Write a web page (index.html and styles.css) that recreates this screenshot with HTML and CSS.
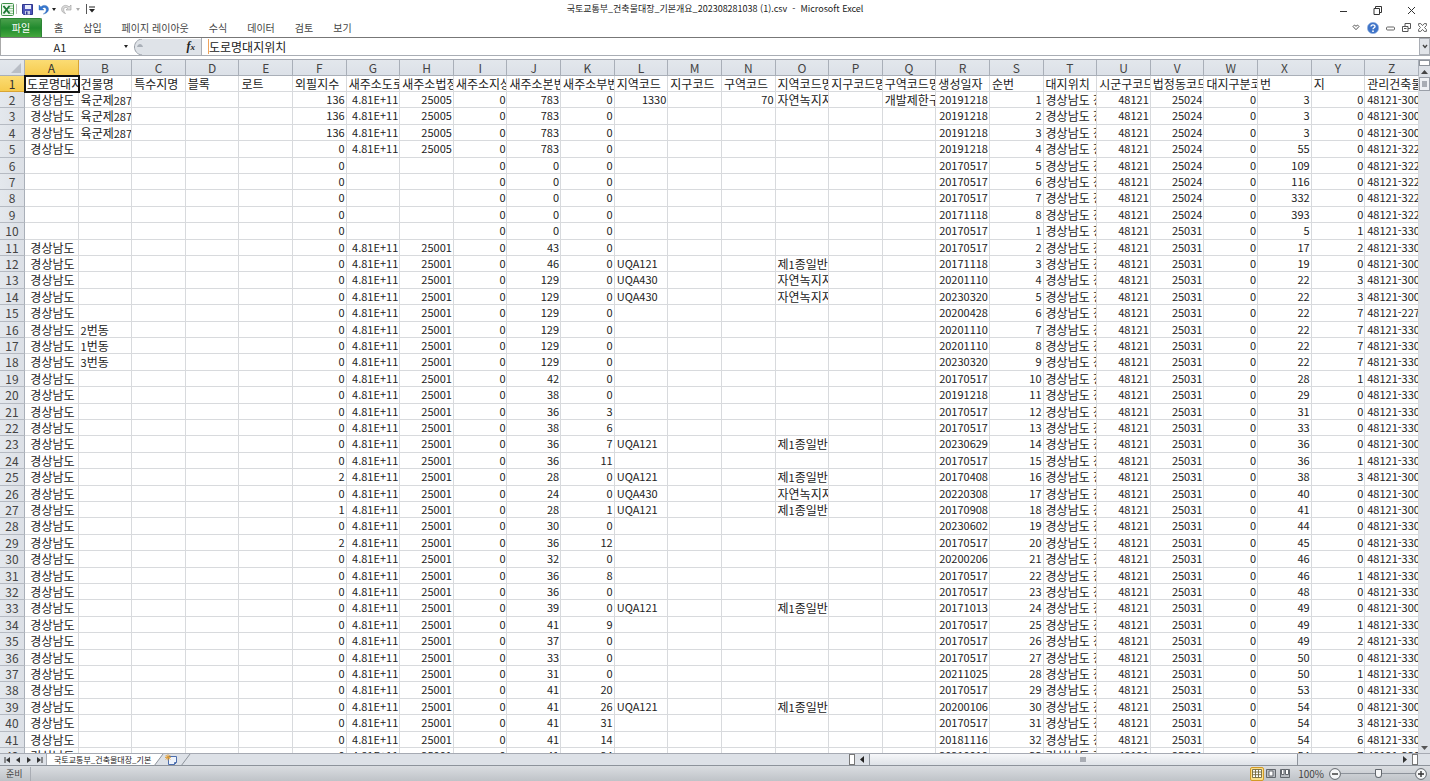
FILE: index.html
```html
<!DOCTYPE html>
<html lang="ko">
<head>
<meta charset="utf-8">
<title>국토교통부_건축물대장_기본개요_202308281038 (1).csv - Microsoft Excel</title>
<link rel="stylesheet" href="styles.css">
</head>
<body>
<div class="app">
  <header class="titlebar">
    <div class="quick">
      <svg class="icon-app" viewBox="0 0 13 13" width="13" height="13"><rect x=".5" y=".5" width="12" height="12" rx="1" fill="#eef7ee" stroke="#3f9148"/><path d="M8 3h4M8 5.500h4M8 8h4M8 10.500h4" stroke="#8cc38d"/><path d="M2.500 3l6 7.500M8.500 3l-6 7.500" stroke="#1d7a35" stroke-width="2"/></svg>
      <span class="divider"></span>
      <button class="plain" aria-label="저장"><svg viewBox="0 0 11 11" width="11" height="11"><path d="M.5.5h10v10h-9l-1-1z" fill="#4d55b8" stroke="#30378f"/><path d="M3 1h6v4H3z" fill="#e8ecfb"/><path d="M3 7h5v3.500H3z" fill="#c9cde8"/><path d="M4 7.500h1.500v3H4z" fill="#30378f"/></svg></button>
      <button class="plain undo" aria-label="실행 취소"><svg viewBox="0 0 11 11" width="11" height="11"><path d="M1 1v5h5L4.300 4.400C6 2.500 8.500 3.500 8.300 6c-.1 1.600-1.300 3-3 4C8 9.700 10.500 8 10.500 5.300 10.500 1.500 6 0 2.900 2.900z" fill="#3677cf" stroke="#2560b0" stroke-width=".4"/></svg></button>
      <span class="caret"></span>
      <button class="plain redo" aria-label="다시 실행"><svg viewBox="0 0 11 11" width="11" height="11"><path d="M10 1v5H5l1.700-1.600C5 2.500 2.500 3.500 2.700 6c.1 1.600.8 2.500 1.800 3.500C2 9 .6 7.500.6 5.300.6 1.500 5 0 8.100 2.900z" fill="#dcdcdc" stroke="#9a9a9a" stroke-width=".6"/></svg></button>
      <span class="caret faded"></span>
      <span class="divider customize"></span>
      <button class="plain" aria-label="빠른 실행 도구 모음 사용자 지정"><svg viewBox="0 0 6 7" width="6" height="7"><path d="M0 1h6" stroke="#222"/><path d="M0 3h6L3 6.500z" fill="#222"/></svg></button>
    </div>
    <h1 class="title">국토교통부_건축물대장_기본개요_202308281038 (1).csv&nbsp; -&nbsp; Microsoft Excel</h1>
    <div class="winbuttons">
      <button class="plain" aria-label="최소화"><svg viewBox="0 0 9 9" width="9" height="9"><path d="M1 5.500h7" stroke="#333"/></svg></button>
      <button class="plain" aria-label="이전 크기로"><svg viewBox="0 0 9 9" width="9" height="9" fill="none" stroke="#333"><path d="M1 2.500h5.500v6H1zM2.500 2.500v-2h6v6h-2"/></svg></button>
      <button class="plain" aria-label="닫기"><svg viewBox="0 0 9 9" width="9" height="9"><path d="M1 1l7 7M8 1L1 8" stroke="#333"/></svg></button>
    </div>
  </header>
  <nav class="ribbon">
    <button class="file">파일</button>
    <button class="tab">홈</button>
    <button class="tab">삽입</button>
    <button class="tab">페이지 레이아웃</button>
    <button class="tab">수식</button>
    <button class="tab">데이터</button>
    <button class="tab">검토</button>
    <button class="tab">보기</button>
    <div class="ribbon-tools">
      <button class="plain" aria-label="리본 메뉴 최소화"><svg viewBox="0 0 8 7" width="8" height="7"><path d="M1 2.500L2.500 1 4 2.300 5.500 1 7 2.500 4 5.700z" fill="none" stroke="#555"/></svg></button>
      <button class="plain" aria-label="도움말"><svg viewBox="0 0 12 12" width="12" height="12"><circle cx="6" cy="6" r="5.700" fill="#3f74c8" stroke="#9cb8e2" stroke-width=".6"/><path d="M4 4.600C4 2.300 8 2.300 8 4.500 8 5.800 6 5.700 6 7.300" fill="none" stroke="#fff" stroke-width="1.400"/><circle cx="6" cy="9.200" r=".9" fill="#fff"/></svg></button>
      <button class="plain" aria-label="창 최소화"><svg viewBox="0 0 9 9" width="9" height="9"><rect x=".5" y="4" width="8" height="3" rx="1" fill="#fff" stroke="#666"/></svg></button>
      <button class="plain" aria-label="창 복원"><svg viewBox="0 0 9 9" width="9" height="9" fill="#fff" stroke="#555"><path d="M3 .5h5.500v5H3z"/><path d="M.5 3.500H6v5H.5z"/><path d="M2 5.500h2.500"/></svg></button>
      <button class="plain" aria-label="창 닫기"><svg viewBox="0 0 9 9" width="9" height="9"><path d="M.6.6h2.200l1.700 2 1.700-2h2.200v2L6.500 4.500l1.900 2v1.900H6.200l-1.700-2-1.700 2H.6V6.500l1.900-2-1.900-2z" fill="#fff" stroke="#555" stroke-width=".9"/></svg></button>
    </div>
  </nav>
  <div class="formula">
    <input class="namebox" aria-label="이름 상자" value="A1">
    <span class="name-arrow"><span class="caret"></span></span>
    <div class="fx"><svg viewBox="0 0 68 16" width="68" height="16"><path d="M9 0h59v16H9C-1 15-1 1 9 0z" fill="#dfe3e8"/><path d="M9 0C-1 1-1 15 9 16" fill="none" stroke="#9aa0a8"/><path d="M4 8c1-4 5-4 6 0z" fill="#aab0b8"/></svg><button class="plain fx-label" aria-label="함수 삽입"><i>f<small>x</small></i></button></div>
    <input class="formula-input" aria-label="수식 입력줄" value="도로명대지위치">
    <button class="expand" aria-label="수식 입력줄 확장"><svg viewBox="0 0 6 5" width="6" height="5"><path d="M1 1l2 2.500L5 1" fill="none" stroke="#444" stroke-width="1.400"/></svg></button>
  </div>
  <main class="work">
    <div class="sheet"><table class="grid"><thead></thead><tbody></tbody></table></div>
    <div class="vscroll">
      <span class="split"></span>
      <button class="arrow" aria-label="위로"><svg viewBox="0 0 7 4" width="7" height="4"><path d="M0 4L3.500 0 7 4z" fill="#444"/></svg></button>
      <div class="vtrack"><div class="vthumb"></div></div>
      <button class="arrow" aria-label="아래로"><svg viewBox="0 0 7 4" width="7" height="4"><path d="M0 0h7L3.500 4z" fill="#555"/></svg></button>
    </div>
  </main>
  <div class="bottom">
    <div class="sheets">
      <div class="navs">
        <button class="plain" aria-label="첫 시트"><svg viewBox="0 0 6 6" width="6" height="6"><path d="M1 0v6" stroke="#333"/><path d="M6 0v6L2 3z" fill="#333"/></svg></button>
        <button class="plain" aria-label="이전 시트"><svg viewBox="0 0 6 6" width="6" height="6"><path d="M5 0v6L1 3z" fill="#333"/></svg></button>
        <button class="plain" aria-label="다음 시트"><svg viewBox="0 0 6 6" width="6" height="6"><path d="M1 0v6l4-3z" fill="#333"/></svg></button>
        <button class="plain" aria-label="마지막 시트"><svg viewBox="0 0 6 6" width="6" height="6"><path d="M0 0v6l4-3z" fill="#333"/><path d="M5 0v6" stroke="#333"/></svg></button>
      </div>
      <button class="sheet-tab">국토교통부_건축물대장_기본</button>
      <button class="plain new-sheet" aria-label="워크시트 삽입"><svg viewBox="0 0 38 12" width="38" height="12"><path d="M0 0h9L0 12z" fill="#fff"/><path d="M0 12L9 0M27 12L36 0" stroke="#8d939b" fill="none"/><path d="M14.500 2.500h8v6l-2 2h-6z" fill="#eef3fc" stroke="#4d6fae"/><path d="M20.500 10.500v-2h2" fill="none" stroke="#4d6fae"/><path d="M14 .3v6M11 3.300h6M11.800 1.100l4.400 4.400M16.200 1.100l-4.400 4.400" stroke="#e09a2d"/></svg></button>
    </div>
    <div class="hscroll">
      <span class="vsplit"></span>
      <button class="harrow" aria-label="왼쪽으로"><svg viewBox="0 0 4 7" width="4" height="7"><path d="M4 0v7L0 3.500z" fill="#222"/></svg></button>
      <div class="htrack"><div class="hthumb"><span></span></div></div>
      <button class="harrow" aria-label="오른쪽으로"><svg viewBox="0 0 4 7" width="4" height="7"><path d="M0 0v7l4-3.500z" fill="#333"/></svg></button>
      <span class="vsplit"></span>
    </div>
  </div>
  <footer class="status">
    <span class="ready">준비</span>
    <span class="status-right">
      <button class="view active" aria-label="기본"><svg viewBox="0 0 10 9" width="10" height="9" fill="#fff" stroke="#75693b" stroke-width=".9"><path d="M.5.500h9v8h-9zM3.500.500v8M6.500.500v8M.5 3h9M.5 5.700h9"/></svg></button>
      <button class="view" aria-label="페이지 레이아웃"><svg viewBox="0 0 10 9" width="10" height="9" stroke="#62676d"><path d="M.5.500h9v8h-9z" fill="#b9bdc2"/><path d="M3 2h4v5H3z" fill="#fff"/></svg></button>
      <button class="view" aria-label="페이지 나누기 미리 보기"><svg viewBox="0 0 10 9" width="10" height="9" stroke="#62676d"><path d="M.5.500h9v8h-9z" fill="#b9bdc2"/><path d="M1.500.500h2.500v5H1.500zM5.500.500h3v5h-3z" fill="#fff"/></svg></button>
      <span class="percent">100%</span>
      <button class="plain" aria-label="축소"><svg viewBox="0 0 12 12" width="12" height="12"><circle cx="6" cy="6" r="5.400" fill="#f6f7f8" stroke="#62676d"/><path d="M3 6h6" stroke="#333" stroke-width="1.400"/></svg></button>
      <input class="zoom" type="range" min="0" max="100" value="50" aria-label="확대/축소">
      <button class="plain" aria-label="확대"><svg viewBox="0 0 12 12" width="12" height="12"><circle cx="6" cy="6" r="5.400" fill="#f6f7f8" stroke="#62676d"/><path d="M3 6h6M6 3v6" stroke="#333" stroke-width="1.400"/></svg></button>
    </span>
  </footer>
</div>
<script src="sheet.js"></script>
</body>
</html>
```
FILE: styles.css
```css
* { box-sizing: border-box; }
body {
  margin: 0;
  font-family: "Noto Sans CJK KR", "Noto Sans", sans-serif;
  font-size: 11px;
  color: #222;
  background: #fff;
}
button, input { font: inherit; color: inherit; margin: 0; padding: 0; border: 0; background: none; }
input:focus { outline: none; }
svg { display: block; flex: none; }
.plain { display: flex; align-items: center; justify-content: center; }
.app { display: flex; flex-direction: column; height: 100vh; overflow: hidden; }

.titlebar { display: grid; grid-template-columns: 1fr auto 1fr; align-items: center; height: 18px; flex: none; }
.quick { display: flex; align-items: center; padding-left: 1px; }
.divider { width: 1px; height: 10px; margin: 0 5px 0 2px; background: #bbb; }
.customize { margin: 0 2px 0 6px; background: #555; }
.caret { border: 2px solid transparent; border-top: 3px solid #222; border-bottom: 0; }
.undo { margin: 0 3px 0 5px; }
.undo + .caret { margin-right: 5px; }
.redo { margin-right: 4px; }
.faded { border-top-color: #aaa; }
.title { margin: 0; font-size: 9px; font-weight: 400; line-height: 18px; white-space: nowrap; }
.winbuttons { display: flex; justify-content: flex-end; gap: 25px; padding: 2px 14px 0 0; }

.ribbon { display: flex; align-items: stretch; height: 20px; flex: none; border-bottom: 1px solid #777; font-size: 10px; color: #444; }
.file { width: 42px; background: linear-gradient(#4aa04c, #218a2d 50%, #45a83d); border: 1px solid #2c8434; border-bottom: 0; border-radius: 1px 2px 0 0; color: #fff; line-height: 16px; }
.tab { padding: 0; margin-left: 20px; white-space: nowrap; line-height: 18px; }
.file + .tab { margin-left: 12px; }
.ribbon-tools { display: flex; align-items: center; gap: 7px; margin-left: auto; padding-right: 3px; }

.formula { display: flex; height: 18px; flex: none; border-bottom: 1px solid #a9adb4; }
.namebox { width: 119px; text-align: center; border-left: 1px solid #aaa; }
.name-arrow { width: 14px; display: flex; align-items: center; justify-content: center; }
.fx { display: grid; align-items: center; width: 69px; border-right: 1px solid #a9adb4; }
.fx > * { grid-area: 1 / 1; }
.fx-label { justify-self: end; margin-right: 6px; font: bold 12px "Liberation Serif", serif; }
.fx-label small { font-size: 9px; }
.formula-input { flex: 1; min-width: 0; margin: 1px 0 1px 6px; border-left: 1px solid #efa45e; font-size: 12px; line-height: 14px; }
.expand { width: 11px; display: flex; align-items: center; justify-content: center; background: #e1e4e9; border: 1px solid #a9adb4; }

.work { display: flex; flex: 1; min-height: 0; margin-top: 3px; border-top: 1px solid #a6aab3; }
.sheet { flex: 1; min-width: 0; overflow: hidden; }
.grid { width: 100%; table-layout: fixed; border-collapse: separate; border-spacing: 0; }
.grid th, .grid td {
  height: 16px; padding: 0 1px; overflow: hidden; white-space: pre;
  line-height: 15px; font-weight: 400; text-align: left; vertical-align: top;
  border-right: 1px solid #d8dadd; border-bottom: 1px solid #d8dadd;
}
.grid tbody tr:nth-child(5n+3) > *, .grid tbody tr:nth-child(5n) > * { height: 17px; }
.grid td.text { font-size: 12px; padding: 0 0 0 2px; }
.grid td.text span { font-size: 11px; line-height: 0; }
.grid td.code { padding: 0 0 0 2px; }
.grid td.number { text-align: right; }
.grid th { text-align: center; padding: 0; font-size: 12px; color: #444; background: #e1e5ea; border-color: #a9afb8; }
.grid tbody th { background: linear-gradient(90deg, #e4e8ed, #dce0e6); border-bottom-color: #b5bac2; }
.grid thead th { background: linear-gradient(#e3e7ec, #dce1e8); }
.grid .corner { width: 25px; }
.corner svg { margin: 3px 3px 0 auto; }
.grid th.selected { background: linear-gradient(#fbdc74, #f6cb4e); border-color: #d9a433; color: #333; }
.grid td.active { position: relative; z-index: 1; outline: 2px solid #111; outline-offset: -1px; }

.vscroll { display: flex; flex-direction: column; width: 11px; background: #dce0e6; }
.split { height: 6px; background: #fff; border: 1px solid #8d939b; }
.arrow { height: 11px; display: flex; align-items: center; justify-content: center; }
.vtrack { flex: 1; }
.vthumb { height: 14px; background: #eef0f3; border: 1px solid #9a9fa8; padding: 3px 2px; }
.vthumb::before { content: ""; display: block; height: 6px; background: #a9adb4; }

.bottom { display: flex; height: 13px; flex: none; background: #dde1e7; border-top: 1px solid #a6aab3; border-bottom: 1px solid #8d939b; }
.sheets { display: flex; width: 59.4%; }
.navs { display: flex; align-items: center; gap: 5px; width: 47px; padding-left: 4px; border-right: 1px solid #a9adb4; }
.sheet-tab { background: #fff; width: 107px; padding-left: 7px; text-align: left; overflow: hidden; white-space: nowrap; font-size: 8px; line-height: 11px; }
.hscroll { flex: 1; display: flex; padding-right: 12px; }
.vsplit { width: 6px; border: 1px solid #777; background: #fff; }
.harrow { width: 14px; display: flex; align-items: center; justify-content: center; }
.htrack { flex: 1; }
.hthumb { height: 11px; width: 81%; display: flex; align-items: center; justify-content: center; background: linear-gradient(#f6f7f9, #dfe3e8); border: 1px solid #8d939b; border-width: 0 1px; }
.hthumb span { width: 6px; height: 5px; background: #a9adb4; }

.status { display: flex; justify-content: space-between; align-items: center; height: 15px; flex: none; padding: 0 3px 0 6px; background: linear-gradient(#dadde1, #bfc3c8); font-size: 9px; color: #444; }
.ready { line-height: 14px; padding-right: 7px; border-right: 1px solid #a9adb4; }
.status-right { display: flex; align-items: center; }
.view { width: 14px; height: 14px; display: flex; align-items: center; justify-content: center; }
.view.active { background: #fbe08a; border: 1px solid #d29a25; border-radius: 2px; }
.percent { font-size: 10px; line-height: 14px; margin: 0 5px 0 6px; }
.zoom { appearance: none; width: 74px; height: 12px; background: linear-gradient(#8d939b, #8d939b) center / 100% 1px no-repeat; }
.zoom::-webkit-slider-thumb { appearance: none; width: 7px; height: 9px; background: #f6f7f8; border: 1px solid #62676d; border-radius: 1px 1px 4px 4px; }
```
FILE: sheet.js
```js
const letters = [..."ABCDEFGHIJKLMNOPQRSTUVWXYZ"];
const headings = ["도로명대지위치", "건물명", "특수지명", "블록", "로트", "외필지수", "새주소도로코드", "새주소법정동", "새주소지상지하", "새주소본번", "새주소부번", "지역코드", "지구코드", "구역코드", "지역코드명", "지구코드명", "구역코드명", "생성일자", "순번", "대지위치", "시군구코드", "법정동코드", "대지구분코드", "번", "지", "관리건축물대장"];
const green = "자연녹지지역";
const general = "제1종일반주거";

// F, J, K, created date, sequence, X, Y, register suffix, then named extras
const rows = [
  [136, 783, 0, 20191218, 1, 3, 0, 300, { B: "육군제287", L: 1330, N: 70, O: green, Q: "개발제한구역" }],
  [136, 783, 0, 20191218, 2, 3, 0, 300, { B: "육군제287" }],
  [136, 783, 0, 20191218, 3, 3, 0, 300, { B: "육군제287" }],
  [0, 783, 0, 20191218, 4, 55, 0, 322],
  [0, 0, 0, 20170517, 5, 109, 0, 322],
  [0, 0, 0, 20170517, 6, 116, 0, 322],
  [0, 0, 0, 20170517, 7, 332, 0, 322],
  [0, 0, 0, 20171118, 8, 393, 0, 322],
  [0, 0, 0, 20170517, 1, 5, 1, 330],
  [0, 43, 0, 20170517, 2, 17, 2, 330],
  [0, 46, 0, 20171118, 3, 19, 0, 300, { L: "UQA121", O: general }],
  [0, 129, 0, 20201110, 4, 22, 3, 300, { L: "UQA430", O: green }],
  [0, 129, 0, 20230320, 5, 22, 3, 300, { L: "UQA430", O: green }],
  [0, 129, 0, 20200428, 6, 22, 7, 227],
  [0, 129, 0, 20201110, 7, 22, 7, 330, { B: "2번동" }],
  [0, 129, 0, 20201110, 8, 22, 7, 330, { B: "1번동" }],
  [0, 129, 0, 20230320, 9, 22, 7, 330, { B: "3번동" }],
  [0, 42, 0, 20170517, 10, 28, 1, 330],
  [0, 38, 0, 20191218, 11, 29, 0, 330],
  [0, 36, 3, 20170517, 12, 31, 0, 330],
  [0, 38, 6, 20170517, 13, 33, 0, 330],
  [0, 36, 7, 20230629, 14, 36, 0, 300, { L: "UQA121", O: general }],
  [0, 36, 11, 20170517, 15, 36, 1, 330],
  [2, 28, 0, 20170408, 16, 38, 3, 300, { L: "UQA121", O: general }],
  [0, 24, 0, 20220308, 17, 40, 0, 300, { L: "UQA430", O: green }],
  [1, 28, 1, 20170908, 18, 41, 0, 300, { L: "UQA121", O: general }],
  [0, 30, 0, 20230602, 19, 44, 0, 330],
  [2, 36, 12, 20170517, 20, 45, 0, 330],
  [0, 32, 0, 20200206, 21, 46, 0, 330],
  [0, 36, 8, 20170517, 22, 46, 1, 330],
  [0, 36, 0, 20170517, 23, 48, 0, 330],
  [0, 39, 0, 20171013, 24, 49, 0, 300, { L: "UQA121", O: general }],
  [0, 41, 9, 20170517, 25, 49, 1, 330],
  [0, 37, 0, 20170517, 26, 49, 2, 330],
  [0, 33, 0, 20170517, 27, 50, 0, 330],
  [0, 31, 0, 20211025, 28, 50, 1, 330],
  [0, 41, 20, 20170517, 29, 53, 0, 330],
  [0, 41, 26, 20200106, 30, 54, 0, 300, { L: "UQA121", O: general }],
  [0, 41, 31, 20170517, 31, 54, 3, 330],
  [0, 41, 14, 20181116, 32, 54, 6, 330],
  [0, 41, 24, 20210910, 33, 54, 7, 330]
];

function record([f, j, k, date, seq, x, y, suffix, extra], index) {
  const line = index + 2;
  const addressed = line < 6 || line > 10;
  return {
    A: addressed ? " 경상남도" : "",
    F: f,
    G: addressed ? "4.81E+11" : "",
    H: addressed ? (line < 6 ? 25005 : 25001) : "",
    I: 0, J: j, K: k, R: date, S: seq, T: "경상남도 창원시",
    U: 48121, V: line < 10 ? 25024 : 25031, W: 0, X: x, Y: y,
    Z: "48121-" + suffix,
    ...extra
  };
}

function cell(value) {
  const td = document.createElement("td");
  if (value === undefined || value === "") return td;
  if (typeof value === "number" || value === "4.81E+11") td.className = "number";
  else if (/^[A-Z0-9-]+$/.test(value)) td.className = "code";
  else td.className = "text";
  td.innerHTML = td.className === "text" ? value.replace(/\d+/g, "<span>$&</span>") : value;
  return td;
}

function rowHeader(number) {
  const th = document.createElement("th");
  th.scope = "row";
  th.textContent = number;
  return th;
}

const head = document.querySelector(".grid thead").insertRow();
head.innerHTML = '<th class="corner"><svg viewBox="0 0 10 10" width="10" height="10"><path d="M10 0v10H0z" fill="#b9bec6"/></svg></th>' +
  letters.map(letter => `<th scope="col">${letter}</th>`).join("");
head.cells[1].classList.add("selected");

const body = document.querySelector(".grid tbody");
[Object.fromEntries(letters.map((letter, i) => [letter, headings[i]])), ...rows.map(record)].forEach((data, i) => {
  const tr = body.insertRow();
  tr.append(rowHeader(i + 1), ...letters.map(letter => cell(data[letter])));
});
body.rows[0].cells[0].classList.add("selected");
body.rows[0].cells[1].classList.add("active");
```
